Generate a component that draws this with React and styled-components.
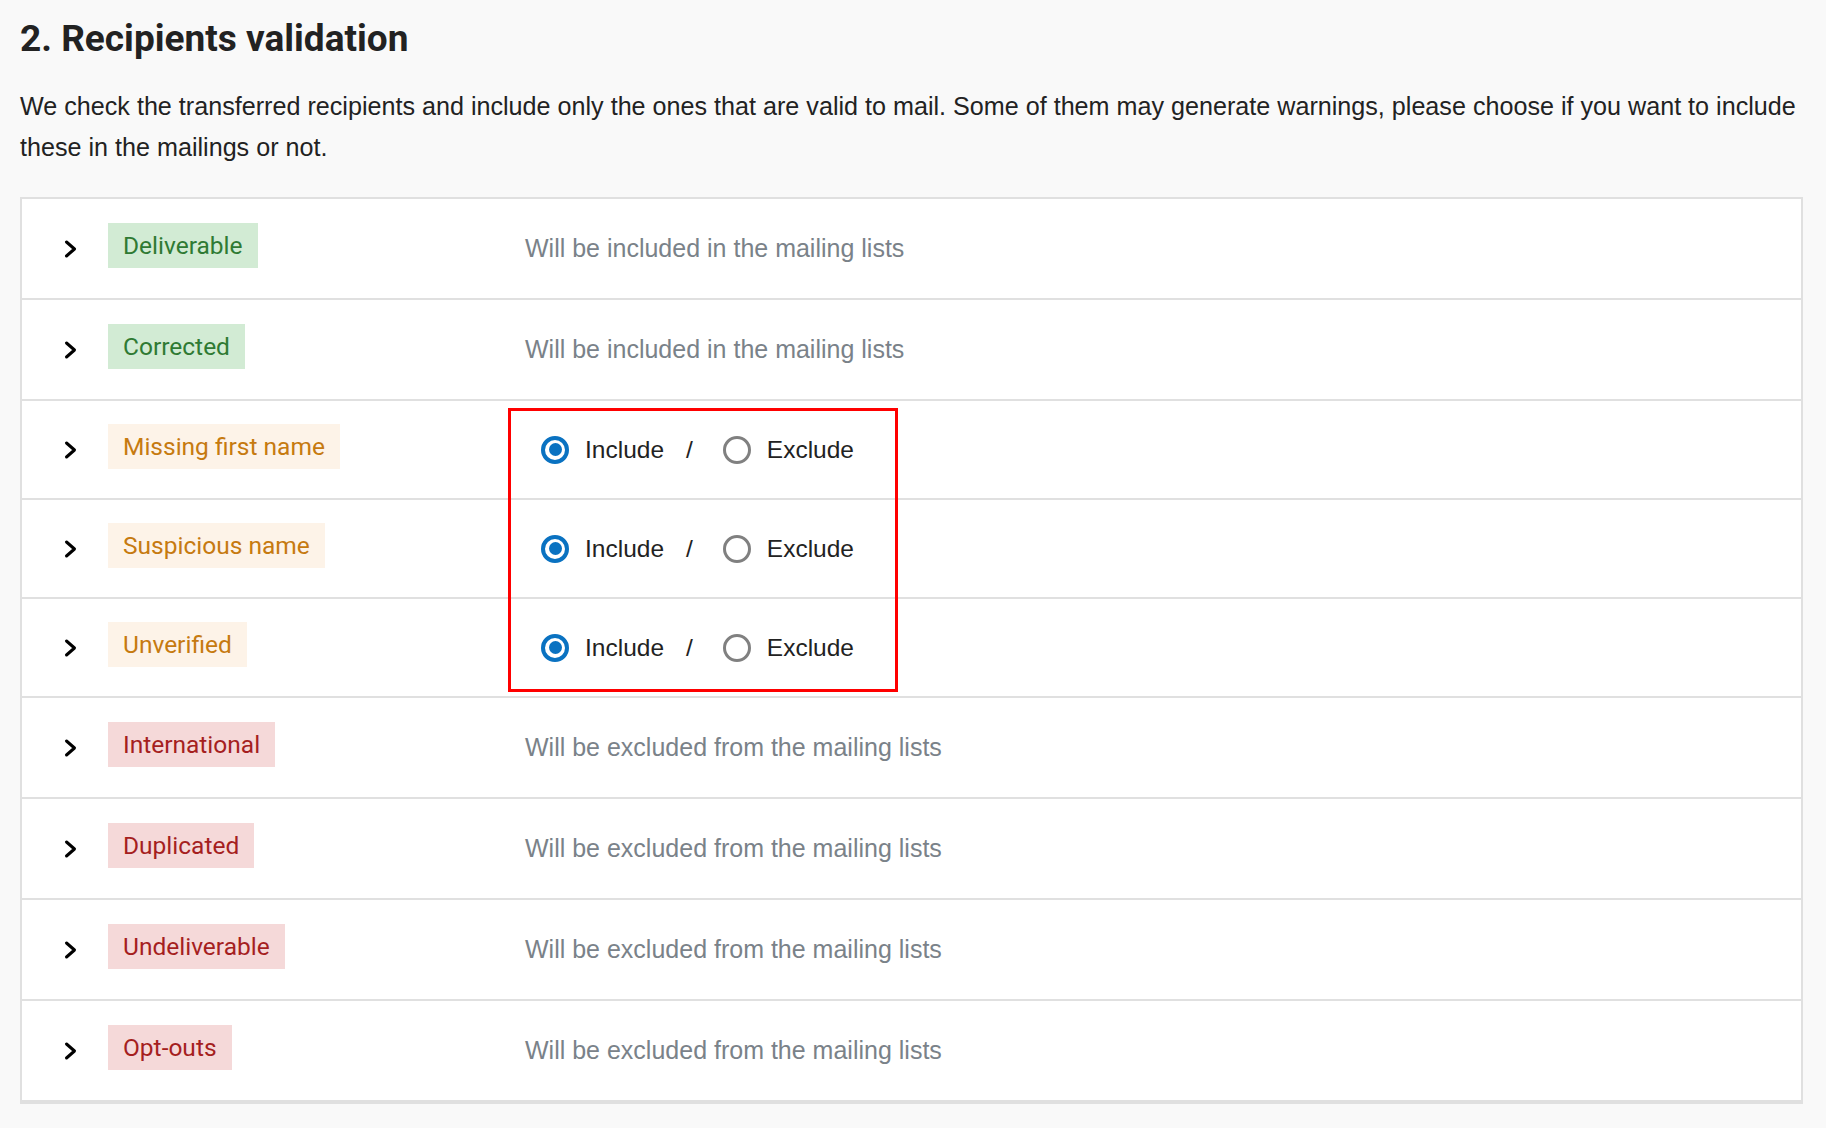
import React from 'react';
import styled, { createGlobalStyle } from 'styled-components';

const GlobalStyle = createGlobalStyle`
  html, body {
    margin: 0;
    padding: 0;
    background: #f9f9f9;
  }
  body {
    font-family: 'Liberation Sans', Arial, sans-serif;
    color: #222;
  }
`;

const tones = {
  green: { bg: '#d2ebd4', fg: '#2f7a33' },
  orange: { bg: '#fdf3e8', fg: '#c67a10' },
  red: { bg: '#f5d9d9', fg: '#a51f1f' },
};

const rows = [
  { label: 'Deliverable', tone: 'green', text: 'Will be included in the mailing lists' },
  { label: 'Corrected', tone: 'green', text: 'Will be included in the mailing lists' },
  { label: 'Missing first name', tone: 'orange', choice: true },
  { label: 'Suspicious name', tone: 'orange', choice: true },
  { label: 'Unverified', tone: 'orange', choice: true },
  { label: 'International', tone: 'red', text: 'Will be excluded from the mailing lists' },
  { label: 'Duplicated', tone: 'red', text: 'Will be excluded from the mailing lists' },
  { label: 'Undeliverable', tone: 'red', text: 'Will be excluded from the mailing lists' },
  { label: 'Opt-outs', tone: 'red', text: 'Will be excluded from the mailing lists' },
];

const Page = styled.main`
  padding: 17px 23px 40px 20px;
`;

const Title = styled.h2`
  margin: 0;
  font-family: Roboto, 'Liberation Sans', sans-serif;
  font-weight: 700;
  font-size: 37px;
  line-height: 43px;
  color: #222;
`;

const Intro = styled.p`
  margin: 26px 0 29px;
  font-size: 25.15px;
  line-height: 41px;
  color: #222;
`;

const Table = styled.div`
  position: relative;
  background: #fff;
  border: 2px solid #e0e0e0;
`;

const Row = styled.div`
  display: grid;
  grid-template-columns: 86px 417px 1fr;
  align-items: center;
  min-height: ${p => (p.choice ? '97px' : '99px')};
  border-bottom: 2px solid #e0e0e0;
  &:last-child {
    border-bottom: none;
  }
`;

const Chevron = styled.span`
  display: flex;
  padding-left: 42px;
  svg {
    display: block;
  }
`;

const Badge = styled.span`
  justify-self: start;
  margin-bottom: 7px;
  padding: 8px 15px;
  font-family: Roboto, 'Liberation Sans', sans-serif;
  font-size: 24.5px;
  line-height: 29px;
  background: ${p => tones[p.tone].bg};
  color: ${p => tones[p.tone].fg};
`;

const Status = styled.span`
  font-size: 25px;
  color: #7a8289;
`;

const Choice = styled.div`
  display: flex;
  align-items: center;
  padding-left: 16px;
  font-size: 24.5px;
  color: #222;
`;

const Option = styled.label`
  display: flex;
  align-items: center;
  gap: 16px;
`;

const Radio = styled.span`
  box-sizing: border-box;
  width: 28px;
  height: 28px;
  border-radius: 50%;
  display: flex;
  align-items: center;
  justify-content: center;
  border: ${p => (p.checked ? '4px solid #0a72c1' : '3px solid #808080')};
  &::after {
    content: '';
    width: 13px;
    height: 13px;
    border-radius: 50%;
    background: ${p => (p.checked ? '#0a72c1' : 'transparent')};
  }
`;

const Slash = styled.span`
  margin: 0 30px 0 22px;
`;

const Highlight = styled.div`
  position: absolute;
  top: 209px;
  left: 486px;
  width: 390px;
  height: 284px;
  box-sizing: border-box;
  border: 3px solid #ff0000;
  pointer-events: none;
`;

const ChevronIcon = () => (
  <svg width="14" height="20" viewBox="0 0 14 20">
    <path d="M2.5 3 L10.5 10 L2.5 17" fill="none" stroke="#000" strokeWidth="3" strokeLinecap="round" strokeLinejoin="round" />
  </svg>
);

export default function App() {
  return (
    <Page>
      <GlobalStyle />
      <Title>2. Recipients validation</Title>
      <Intro>
        We check the transferred recipients and include only the ones that are valid to mail. Some of them may generate
        warnings, please choose if you want to include these in the mailings or not.
      </Intro>
      <Table>
        {rows.map(r => (
          <Row key={r.label} choice={r.choice}>
            <Chevron>
              <ChevronIcon />
            </Chevron>
            <Badge tone={r.tone}>{r.label}</Badge>
            {r.choice ? (
              <Choice>
                <Option>
                  <Radio checked />
                  Include
                </Option>
                <Slash>/</Slash>
                <Option>
                  <Radio />
                  Exclude
                </Option>
              </Choice>
            ) : (
              <Status>{r.text}</Status>
            )}
          </Row>
        ))}
        <Highlight />
      </Table>
    </Page>
  );
}
